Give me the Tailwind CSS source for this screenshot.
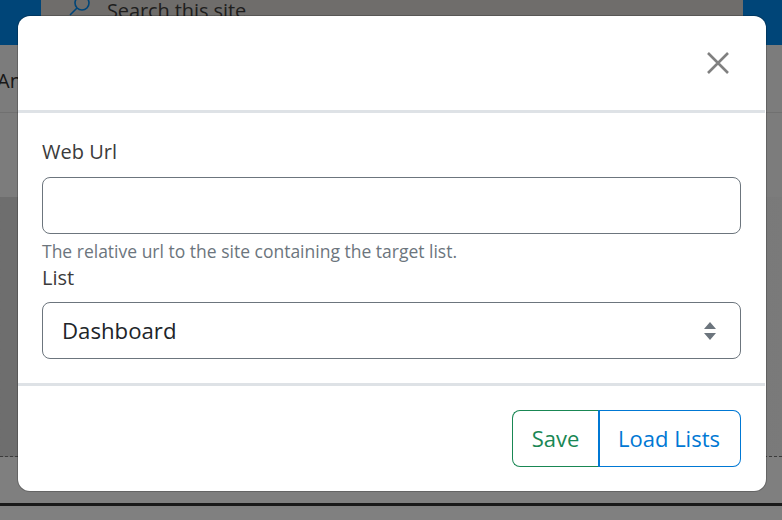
<!DOCTYPE html>
<html lang="en">
<head>
    <meta charset="UTF-8">
    <title>Web part settings</title>
    <script src="https://cdn.jsdelivr.net/npm/@tailwindcss/browser@4"></script>
</head>
<body class="relative w-[782px] h-[520px] overflow-hidden bg-white font-['Open_Sans','Noto_Sans',sans-serif]">
    <!-- page behind the dialog -->
    <div class="flex flex-col h-full">
        <div class="h-[45px] bg-[#008af0] pl-[41px] pr-[39px] shrink-0">
            <div class="relative h-full bg-[#dedad6] flex items-start pl-[66px] overflow-hidden">
                <svg class="absolute left-[27px] -top-[6px] w-[24px] h-[24px] text-[#008af0]" viewBox="0 0 24 24" fill="none" stroke="currentColor" stroke-width="1.6">
                    <circle cx="14" cy="9" r="7"/>
                    <path d="M9 14 2 21"/>
                </svg>
                <span class="text-[20px] leading-none mt-[1px] tracking-[-0.1px] text-[#3f3e3d]">Search this site</span>
            </div>
        </div>
        <div class="h-[68px] shrink-0 bg-[#f8f8f8] border-b border-[#e1e1e1] flex items-center">
            <span class="text-[20px] text-[#323130] -ml-[3px] mt-[5px]">An</span>
        </div>
        <div class="h-[84px] shrink-0 bg-[#f8f8f8]"></div>
        <div class="h-[260px] shrink-0 bg-gradient-to-r from-[#dcdcdc] to-[#f4f4f4] border-b border-dashed border-[#777]"></div>
        <div class="h-[49px] shrink-0 border-b-[3px] border-[#333]"></div>
    </div>

    <div class="absolute inset-0 bg-black/50"></div>

    <!-- dialog -->
    <div class="absolute left-[18px] top-[16px] w-[748px] h-[475px] bg-white rounded-[12px] ring-1 ring-black/20 flex flex-col text-[#212529]">
        <div class="h-[97px] shrink-0 mr-px border-b-[3px] border-[#dee2e6] flex justify-end pt-[35px] pr-[35px]">
            <svg class="w-[24px] h-[24px] text-[#808080]" viewBox="0 0 24 24" fill="none" stroke="currentColor" stroke-width="2.6">
                <path d="M2 2 22 22M22 2 2 22"/>
            </svg>
        </div>
        <div class="flex-1 pl-[24px] pr-[25px] pt-[24px]">
            <label class="block text-[20px] leading-[30px] text-[#3b3b3b]">Web Url</label>
            <input type="text" class="block w-full h-[57px] mt-[10px] rounded-[8px] border border-[#6c757d] bg-white">
            <div class="text-[17.5px] leading-[26px] mt-[4px] text-[#6c757d]">The relative url to the site containing the target list.</div>
            <label class="block text-[20px] leading-[30px] -mt-[1px] text-[#3b3b3b]">List</label>
            <div class="flex items-center justify-between h-[57px] mt-[9px] rounded-[8px] border border-[#6c757d] pl-[19px] pr-[23px]">
                <span class="text-[22.2px] leading-[30px] mt-[1px]">Dashboard</span>
                <svg class="w-[14px] h-[20px] text-[#6c757d]" viewBox="0 0 14 20" fill="currentColor">
                    <path d="M7 1 13 8H1ZM7 19 1 12H13Z"/>
                </svg>
            </div>
        </div>
        <div class="h-[108px] shrink-0 mr-px border-t-[3px] border-[#dee2e6] flex justify-end items-start pt-[24px] pr-[24px]">
            <div class="flex h-[57px] text-[22px] leading-none">
                <button class="w-[86px] pb-[1px] rounded-l-[8px] border border-r-0 border-[#198754] text-[#198754]">Save</button>
                <button class="w-[143px] pb-[1px] pr-[2px] rounded-r-[8px] border-[1px] border-l-2 border-[#0078d4] text-[#0078d4]">Load Lists</button>
            </div>
        </div>
    </div>
</body>
</html>
